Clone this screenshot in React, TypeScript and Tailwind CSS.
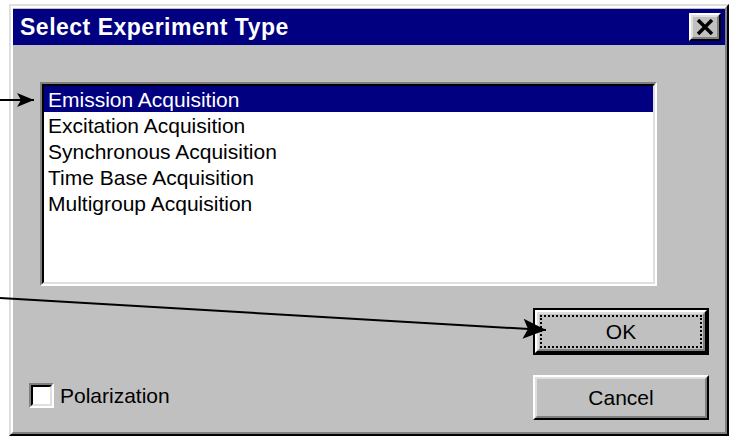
import React from 'react';

const items = [
  'Emission Acquisition',
  'Excitation Acquisition',
  'Synchronous Acquisition',
  'Time Base Acquisition',
  'Multigroup Acquisition',
];

const Arrows: React.FC = () => (
  <svg className="absolute inset-0 pointer-events-none" width="734" height="438" viewBox="0 0 734 438">
    <defs>
      <marker id="headSmall" markerUnits="userSpaceOnUse" markerWidth="18" markerHeight="14" refX="17" refY="7" orient="auto">
        <path d="M0,0 L17,7 L0,14 L4,7 Z" fill="#000" />
      </marker>
      <marker id="headBig" markerUnits="userSpaceOnUse" markerWidth="24" markerHeight="20" refX="23" refY="10" orient="auto">
        <path d="M0,0 L23,10 L0,20 L5,10 Z" fill="#000" />
      </marker>
    </defs>
    <line x1="0" y1="100" x2="34" y2="100" stroke="#000" strokeWidth="2" markerEnd="url(#headSmall)" />
    <line x1="0" y1="298" x2="546" y2="330" stroke="#000" strokeWidth="2" markerEnd="url(#headBig)" />
  </svg>
);

const CloseButton: React.FC = () => (
  <div className="w-[32px] h-[28px] mr-[4px] bg-[#c0c0c0] border-2 border-t-white border-l-white border-r-black border-b-black">
    <div className="w-full h-full border-2 border-t-[#dfdfdf] border-l-[#dfdfdf] border-r-[#808080] border-b-[#808080] flex items-center justify-center">
      <svg width="18" height="16" viewBox="0 0 18 16">
        <path d="M2,1 L16,15 M16,1 L2,15" stroke="#000" strokeWidth="3.5" />
      </svg>
    </div>
  </div>
);

export default function App() {
  return (
    <div className="relative w-[734px] h-[438px] bg-white overflow-hidden" style={{ fontFamily: '"Liberation Sans", Arial, sans-serif' }}>
      <div className="ml-[9px] mt-[4px] w-[720px] h-[432px] border-2 border-t-[#dfdfdf] border-l-[#dfdfdf] border-r-black border-b-black">
        <div className="w-full h-full bg-[#c0c0c0] border-2 border-t-white border-l-white border-r-[#808080] border-b-[#808080] flex flex-col pt-[1px]">
          <div className="h-[36px] bg-[#000080] flex items-center justify-between pl-[7px]">
            <span className="text-white font-bold text-[23px] tracking-[0.5px] leading-none">Select Experiment Type</span>
            <CloseButton />
          </div>

          <div className="flex-1 flex flex-col pt-[37px] pl-[16px] pr-[16px] pb-[12px]">
            <div className="ml-[11px] w-[617px] h-[204px] border-2 border-t-[#808080] border-l-[#808080] border-r-white border-b-white">
              <div className="w-full h-full bg-white border-2 border-t-black border-l-black border-r-[#dfdfdf] border-b-[#dfdfdf]">
                {items.map((it, i) => (
                  <div
                    key={it}
                    className={
                      'h-[26px] pt-[2px] pl-[4px] text-[21px] leading-[24px] whitespace-nowrap ' +
                      (i === 0 ? 'bg-[#000080] text-white' : 'text-black')
                    }
                  >
                    {it}
                  </div>
                ))}
              </div>
            </div>

            <div className="flex-1 flex items-end justify-between">
              <div className="flex items-center gap-[6px] mb-[12px]">
                <div className="w-[25px] h-[25px] border-2 border-t-[#808080] border-l-[#808080] border-r-white border-b-white">
                  <div className="w-full h-full bg-white border-2 border-t-black border-l-black border-r-[#dfdfdf] border-b-[#dfdfdf]" />
                </div>
                <span className="text-[21px] leading-none text-black">Polarization</span>
              </div>

              <div className="flex flex-col gap-[20px]">
                <div className="w-[176px] h-[47px] border-2 border-black">
                  <div className="w-full h-full border-2 border-t-white border-l-white border-r-black border-b-black">
                    <div className="w-full h-full border-2 border-t-[#dfdfdf] border-l-[#dfdfdf] border-r-[#808080] border-b-[#808080] p-[1px]">
                      <div className="w-full h-full border-2 border-dotted border-black flex items-center justify-center text-[21px] leading-none text-black">
                        OK
                      </div>
                    </div>
                  </div>
                </div>
                <div className="w-[176px] h-[45px] border-2 border-t-white border-l-white border-r-black border-b-black">
                  <div className="w-full h-full border-2 border-t-[#dfdfdf] border-l-[#dfdfdf] border-r-[#808080] border-b-[#808080] flex items-center justify-center text-[21px] leading-none text-black">
                    Cancel
                  </div>
                </div>
              </div>
            </div>
          </div>
        </div>
      </div>
      <Arrows />
    </div>
  );
}
